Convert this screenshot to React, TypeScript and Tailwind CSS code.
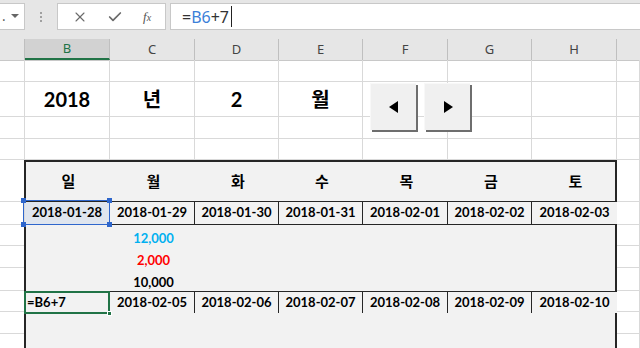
import { X, Check } from 'lucide-react';

const cols = [
    { key: 'B', w: 'w-[85px]' },
    { key: 'C', w: 'w-[85px]' },
    { key: 'D', w: 'w-[84px]' },
    { key: 'E', w: 'w-[84px]' },
    { key: 'F', w: 'w-[85px]' },
    { key: 'G', w: 'w-[84px]' },
    { key: 'H', w: 'w-[85px]' },
];

const sideRows = ['h-[22px]', 'h-[35px]', 'h-[22px]', 'h-[21px]', 'h-[42px]', 'h-[23px]', 'h-[21px]', 'h-[22px]', 'h-[23px]', 'h-[21px]', 'h-[22px]', 'h-[22px]'];

const days = ['일', '월', '화', '수', '목', '금', '토'];
const week1 = ['2018-01-28', '2018-01-29', '2018-01-30', '2018-01-31', '2018-02-01', '2018-02-02', '2018-02-03'];
const week2 = ['', '2018-02-05', '2018-02-06', '2018-02-07', '2018-02-08', '2018-02-09', '2018-02-10'];

const cellFont = { fontFamily: 'Lato, "Noto Sans CJK KR", sans-serif' };

function SideColumn({ width }: { width: string }) {
    return (
        <div className={`${width} flex flex-col shrink-0`}>
            {sideRows.map((h, i) => (
                <div key={i} className={`${h} border-b border-r border-[#d9d9d9] shrink-0`} />
            ))}
        </div>
    );
}

function GridRow({ height, children }: { height: string; children?: (i: number) => React.ReactNode }) {
    return (
        <div className={`flex ${height} shrink-0`}>
            {cols.map((c, i) => (
                <div key={c.key} className={`${c.w} h-full border-b border-r border-[#d9d9d9] flex items-center justify-center shrink-0`}>
                    {children ? children(i) : null}
                </div>
            ))}
        </div>
    );
}

function ArrowButton({ dir }: { dir: 'left' | 'right' }) {
    return (
        <div className="w-[46px] h-[47px] bg-[#f0f0f0] border-t border-l border-[#f8f8f8] shadow-[2px_2px_0_#6e6e6e] flex items-center justify-center">
            <svg width="10" height="12" viewBox="0 0 10 12">
                {dir === 'left' ? <polygon points="9,0 9,12 0,6" fill="#000" /> : <polygon points="1,0 1,12 10,6" fill="#000" />}
            </svg>
        </div>
    );
}

export default function App() {
    const title = ['2018', '년', '2', '월'];
    return (
        <div className="w-[640px] h-[348px] overflow-hidden bg-white relative" style={{ fontFamily: '"Noto Sans CJK KR", sans-serif' }}>
            {/* formula bar */}
            <div className="h-[39px] bg-[#e6e6e6] flex items-start pt-[3px] gap-0">
                <div className="w-[25px] h-[27px] bg-white border-y border-r border-[#c8c8c8] flex items-center justify-between px-[2px] shrink-0">
                    <span className="text-[13px] text-[#444] leading-none -mt-[2px]">.</span>
                    <svg width="8" height="5" viewBox="0 0 8 5" className="mr-[3px]"><polygon points="0,0 8,0 4,4" fill="#666" /></svg>
                </div>
                <div className="w-[32px] h-[27px] flex flex-col items-center justify-center gap-[2px] shrink-0">
                    <span className="w-[2px] h-[2px] bg-[#a0a0a0]" />
                    <span className="w-[2px] h-[2px] bg-[#a0a0a0]" />
                    <span className="w-[2px] h-[2px] bg-[#a0a0a0]" />
                </div>
                <div className="w-[109px] h-[27px] bg-white border border-[#c8c8c8] flex items-center justify-around px-[4px] shrink-0">
                    <X size={16} strokeWidth={1.6} className="text-[#6a6a6a]" />
                    <Check size={16} strokeWidth={2.6} className="text-[#6a6a6a]" />
                    <span className="text-[13px] italic text-[#555]" style={{ fontFamily: '"Liberation Serif", serif' }}>f<span className="text-[10px]">x</span></span>
                </div>
                <div className="ml-[4px] flex-1 h-[27px] bg-white border-y border-l border-[#c8c8c8] flex items-center pl-[11px]">
                    <span className="text-[16px] leading-none" style={{ fontFamily: '"Noto Sans", sans-serif' }}>
                        <span className="text-[#333]">=</span>
                        <span className="text-[#3c7fd8]">B6</span>
                        <span className="text-[#333]">+7</span>
                    </span>
                    <span className="w-[1px] h-[21px] bg-[#222] ml-[2px]" />
                </div>
            </div>

            {/* column headers */}
            <div className="h-[22px] flex bg-[#e6e6e6] border-b border-[#c8c8c8] text-[13px] text-[#444]" style={{ fontFamily: '"Noto Sans", sans-serif' }}>
                <div className="w-[25px] shrink-0 border-r border-[#bfbfbf]" />
                {cols.map((c, i) => (
                    <div
                        key={c.key}
                        className={`${c.w} shrink-0 flex items-center justify-center border-r border-[#bfbfbf] ${i === 0 ? 'bg-[#d2d2d2] border-b-2 border-b-[#217346] text-[#217346]' : ''}`}
                    >
                        {c.key}
                    </div>
                ))}
                <div className="flex-1" />
            </div>

            {/* sheet body */}
            <div className="flex -mt-[1px]">
                <SideColumn width="w-[25px]" />
                <div className="w-[592px] shrink-0 flex flex-col relative">
                    <GridRow height="h-[22px]" />
                    <GridRow height="h-[35px]">
                        {(i) => (i < 4 ? <span className="text-[20px] font-bold text-black" style={cellFont}>{title[i]}</span> : null)}
                    </GridRow>
                    <GridRow height="h-[22px]" />
                    <GridRow height="h-[21px]" />

                    <div className="absolute left-[345px] top-[23px] flex gap-[8px]">
                        <ArrowButton dir="left" />
                        <ArrowButton dir="right" />
                    </div>

                    {/* calendar table */}
                    <div className="bg-[#f2f2f2] flex flex-col" style={cellFont}>
                        <div className="h-[42px] flex border-t-2 border-x-2 border-b border-[#262626] -ml-[1px]">
                            {cols.map((c, i) => (
                                <div key={c.key} className={`${c.w} shrink-0 flex items-center justify-center text-[15px] font-bold text-black`} style={{ fontFamily: '"Noto Sans CJK KR", sans-serif' }}>
                                    {days[i]}
                                </div>
                            ))}
                        </div>
                        <div className="h-[23px] flex border-b border-[#262626]">
                            {cols.map((c, i) => (
                                <div key={c.key} className={`${c.w} shrink-0 flex items-center justify-center text-[13px] font-bold text-black ${i < 6 ? 'border-r border-[#262626]' : ''} ${i === 0 ? 'bg-[#dfe5ee]' : ''}`}>
                                    {week1[i]}
                                </div>
                            ))}
                        </div>
                        <div className="h-[66px] border-x-2 border-[#262626] -ml-[1px] flex">
                            <div className="w-[85px] shrink-0" />
                            <div className="w-[85px] shrink-0 flex flex-col items-center pt-[2px] text-[13px] font-bold leading-[22px]">
                                <span className="text-[#00b0f0]">12,000</span>
                                <span className="text-[#ff0000]">2,000</span>
                                <span className="text-black">10,000</span>
                            </div>
                        </div>
                        <div className="h-[22px] flex border-t border-[#262626]">
                            {cols.map((c, i) => (
                                <div key={c.key} className={`${c.w} shrink-0 flex items-center text-[13px] font-bold text-black ${i === 0 ? 'justify-start pl-[2px]' : 'justify-center'} ${i < 6 ? 'border-r border-[#262626]' : ''}`}>
                                    {i === 0 ? '=B6+7' : week2[i]}
                                </div>
                            ))}
                        </div>
                        <div className="h-[44px] border-x-2 border-[#262626] -ml-[1px]" />

                        {/* selected text box on B6 */}
                        <div className="absolute left-[-2px] top-[140px] w-[87px] h-[25px] border-[1.5px] border-[#2e66cc]">
                            <span className="absolute -left-[3px] -top-[3px] w-[5px] h-[5px] bg-[#2e66cc]" />
                            <span className="absolute -right-[3px] -top-[3px] w-[5px] h-[5px] bg-[#2e66cc]" />
                            <span className="absolute -left-[3px] -bottom-[3px] w-[5px] h-[5px] bg-[#2e66cc]" />
                            <span className="absolute -right-[3px] -bottom-[3px] w-[5px] h-[5px] bg-[#2e66cc]" />
                        </div>
                        {/* active cell B8 */}
                        <div className="absolute left-[-1px] top-[231px] w-[86px] h-[23px] border-2 border-[#217346]">
                            <span className="absolute -right-[4px] -bottom-[4px] w-[5px] h-[5px] bg-[#217346] border border-white" />
                        </div>
                    </div>
                </div>
                <SideColumn width="w-[23px]" />
            </div>
        </div>
    );
}
